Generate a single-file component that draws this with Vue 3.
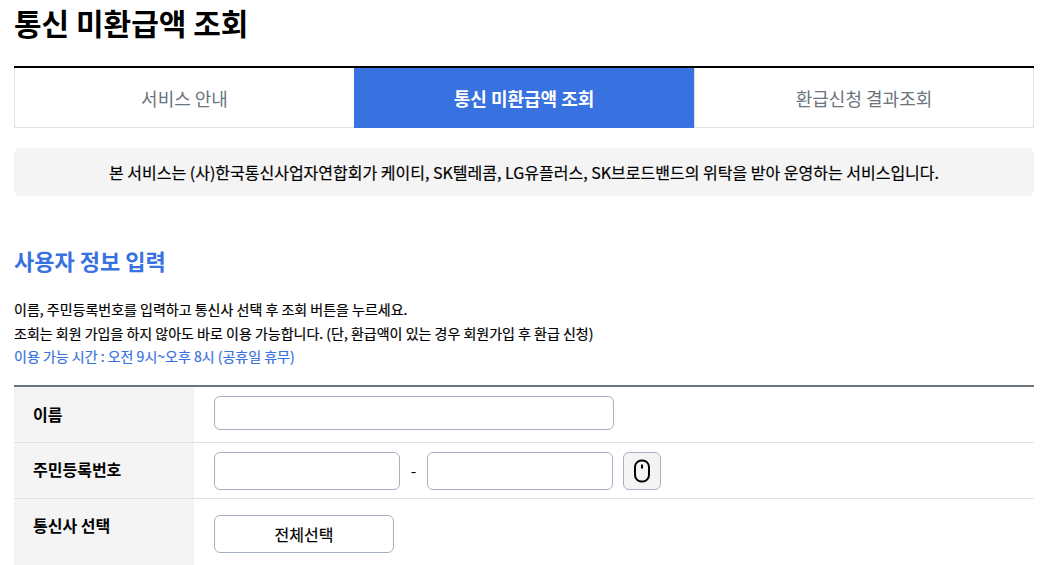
<script setup>
const tabs = [
  { label: '서비스 안내', active: false },
  { label: '통신 미환급액 조회', active: true },
  { label: '환급신청 결과조회', active: false },
]
</script>

<template>
  <div class="page">
    <h1 class="title">통신 미환급액 조회</h1>
    <div class="tabs">
      <div v-for="t in tabs" :key="t.label" class="tab" :class="{ active: t.active }">{{ t.label }}</div>
    </div>
    <div class="notice">본 서비스는 (사)한국통신사업자연합회가 케이티, SK텔레콤, LG유플러스, SK브로드밴드의 위탁을 받아 운영하는 서비스입니다.</div>
    <h2 class="heading">사용자 정보 입력</h2>
    <div class="desc">
      <p>이름, 주민등록번호를 입력하고 통신사 선택 후 조회 버튼을 누르세요.</p>
      <p>조회는 회원 가입을 하지 않아도 바로 이용 가능합니다. (단, 환급액이 있는 경우 회원가입 후 환급 신청)</p>
      <p class="blue">이용 가능 시간 : 오전 9시~오후 8시 (공휴일 휴무)</p>
    </div>
    <div class="form">
      <div class="row r1">
        <div class="label">이름</div>
        <div class="cell"><input class="input name" type="text" /></div>
      </div>
      <div class="row r2">
        <div class="label">주민등록번호</div>
        <div class="cell">
          <input class="input rrn" type="text" />
          <span class="dash">-</span>
          <input class="input rrn" type="text" />
          <button class="mouse" type="button" aria-label="마우스 입력">
            <svg width="18" height="24" viewBox="0 0 18 24" fill="none" stroke="#000" stroke-width="2">
              <rect x="2" y="1.5" width="14" height="21" rx="6.5" />
              <path d="M9 5.5v4" />
            </svg>
          </button>
        </div>
      </div>
      <div class="row r3">
        <div class="label">통신사 선택</div>
        <div class="cell"><button class="all" type="button">전체선택</button></div>
      </div>
    </div>
  </div>
</template>

<style scoped>
.page {
  width: 1020px;
  margin-left: 14px;
  font-family: "Noto Sans CJK KR", "Noto Sans", sans-serif;
  color: #000;
  height: 565px;
  overflow: hidden;
}
.title {
  margin: 0;
  height: 66px;
  box-sizing: border-box;
  font-size: 30px;
  line-height: 44px;
  font-weight: 700;
}
.tabs {
  display: flex;
  border-top: 2px solid #000;
  height: 62px;
  box-sizing: border-box;
}
.tab {
  flex: 0 0 340px;
  box-sizing: border-box;
  display: flex;
  align-items: center;
  justify-content: center;
  border: 1px solid #dee2e6;
  border-top: 0;
  color: #6c757d;
  font-size: 18px;
  font-weight: 400;
}
.tab:first-child { border-right: 0; }
.tab.active {
  background: #3871e0;
  color: #fff;
  font-weight: 700;
  border: 0;
}
.notice {
  margin-top: 20px;
  height: 48px;
  display: flex;
  align-items: center;
  justify-content: center;
  background: #f4f4f4;
  border-radius: 6px;
  font-size: 16px;
  font-weight: 400;
  -webkit-text-stroke: 0.2px currentColor;
}
.heading {
  margin: 44px 0 0;
  color: #3871e0;
  font-size: 22px;
  line-height: 40px;
  font-weight: 700;
}
.desc {
  margin-top: 17.8px;
  font-size: 14px;
  line-height: 1.7;
  font-weight: 400;
  -webkit-text-stroke: 0.2px currentColor;
}
.desc p { margin: 0; }
.blue { color: #3871e0; }
.form {
  margin-top: 15.8px;
  border-top: 2px solid #6c757d;
}
.row {
  display: flex;
  border-bottom: 1px solid #dee2e6;
  box-sizing: border-box;
}
.r1, .r2 { height: 56px; }
.r3 { height: 70px; }
.label {
  width: 180px;
  flex: none;
  box-sizing: border-box;
  padding-left: 19px;
  background: #f4f4f4;
  font-size: 16px;
  line-height: 24px;
  font-weight: 700;
}
.r1 .label { padding-top: 15px; }
.r2 .label, .r3 .label { padding-top: 14px; }
.cell {
  flex: 1;
  display: flex;
  align-items: flex-start;
  padding: 9px 0 0 20px;
}
.r3 .cell { padding-top: 16px; }
.input {
  box-sizing: border-box;
  border: 1px solid #a5b1c2;
  border-radius: 6px;
  background: #fff;
  outline: 0;
  padding: 0;
}
.name { width: 400px; height: 34px; }
.rrn { width: 186px; height: 38px; }
.dash { width: 27px; text-align: center; font-size: 16px; line-height: 36px; }
.mouse {
  margin-left: 10px;
  width: 38px;
  height: 38px;
  padding: 0;
  box-sizing: border-box;
  border: 1px solid #a5b1c2;
  border-radius: 6px;
  background: #f4f4f4;
  display: flex;
  align-items: center;
  justify-content: center;
}
.all {
  width: 180px;
  height: 38px;
  box-sizing: border-box;
  border: 1px solid #a5b1c2;
  border-radius: 6px;
  background: #fff;
  font-family: inherit;
  font-size: 16px;
  font-weight: 400;
  -webkit-text-stroke: 0.2px currentColor;
  color: #000;
  padding: 0;
}
</style>
